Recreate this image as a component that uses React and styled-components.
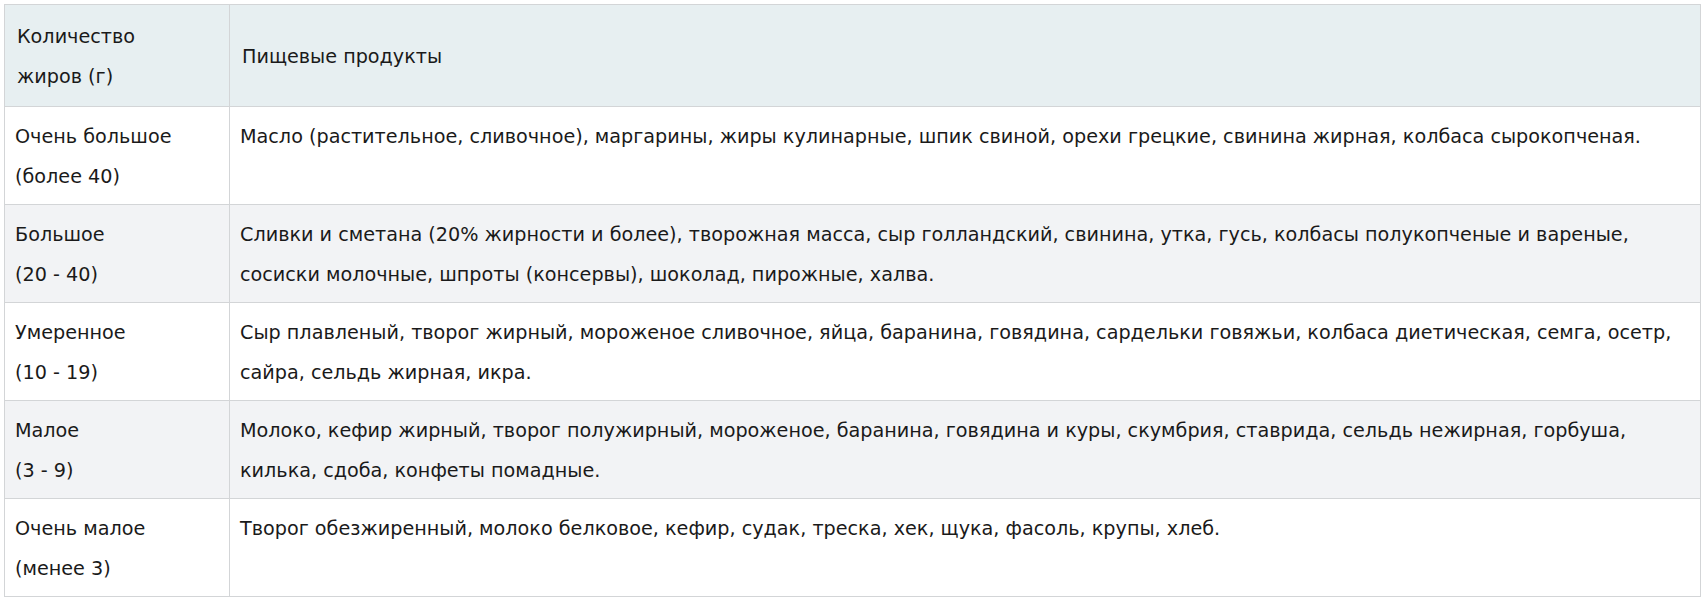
import React from 'react';
import styled, { createGlobalStyle } from 'styled-components';

const rows = [
  {
    amount: ['Очень большое', '(более 40)'],
    foods: 'Масло (растительное, сливочное), маргарины, жиры кулинарные, шпик свиной, орехи грецкие, свинина жирная, колбаса сырокопченая.',
  },
  {
    amount: ['Большое', '(20 - 40)'],
    foods: 'Сливки и сметана (20% жирности и более), творожная масса, сыр голландский, свинина, утка, гусь, колбасы полукопченые и вареные, сосиски молочные, шпроты (консервы), шоколад, пирожные, халва.',
  },
  {
    amount: ['Умеренное', '(10 - 19)'],
    foods: 'Сыр плавленый, творог жирный, мороженое сливочное, яйца, баранина, говядина, сардельки говяжьи, колбаса диетическая, семга, осетр, сайра, сельдь жирная, икра.',
  },
  {
    amount: ['Малое', '(3 - 9)'],
    foods: 'Молоко, кефир жирный, творог полужирный, мороженое, баранина, говядина и куры, скумбрия, ставрида, сельдь нежирная, горбуша, килька, сдоба, конфеты помадные.',
  },
  {
    amount: ['Очень малое', '(менее 3)'],
    foods: 'Творог обезжиренный, молоко белковое, кефир, судак, треска, хек, щука, фасоль, крупы, хлеб.',
  },
];

export default function App() {
  return (
    <>
      <GlobalStyle />
      <Page>
        <Table>
          <colgroup>
            <col style={{ width: '225px' }} />
            <col />
          </colgroup>
          <thead>
            <tr>
              <HeadCell>Количество<br />жиров (г)</HeadCell>
              <HeadCell>Пищевые продукты</HeadCell>
            </tr>
          </thead>
          <tbody>
            {rows.map((row, i) => (
              <Row key={i} $striped={i % 2 === 1}>
                <Cell>{row.amount[0]}<br />{row.amount[1]}</Cell>
                <Cell>{row.foods}</Cell>
              </Row>
            ))}
          </tbody>
        </Table>
      </Page>
    </>
  );
}

const GlobalStyle = createGlobalStyle`
  body {
    margin: 0;
    background: #ffffff;
    font-family: "DejaVu Sans", "Liberation Sans", sans-serif;
  }
`;

const Page = styled.div`
  padding: 4px 5px 0 4px;
`;

const Table = styled.table`
  width: 1697px;
  border-collapse: collapse;
  table-layout: fixed;
  border: 1px solid #d3d5d7;
  color: #1a1a1a;
  font-size: 19.2px;
  line-height: 40px;
`;

const HeadCell = styled.th`
  background: #e7eff1;
  font-weight: normal;
  text-align: left;
  vertical-align: middle;
  padding: 12px 10px 9px 12px;
  border: 1px solid #d3d5d7;
`;

const Row = styled.tr`
  background: ${(p) => (p.$striped ? '#f2f3f5' : '#ffffff')};
`;

const Cell = styled.td`
  vertical-align: top;
  padding: 10px 12px 7px 10px;
  border: 1px solid #d3d5d7;
`;
